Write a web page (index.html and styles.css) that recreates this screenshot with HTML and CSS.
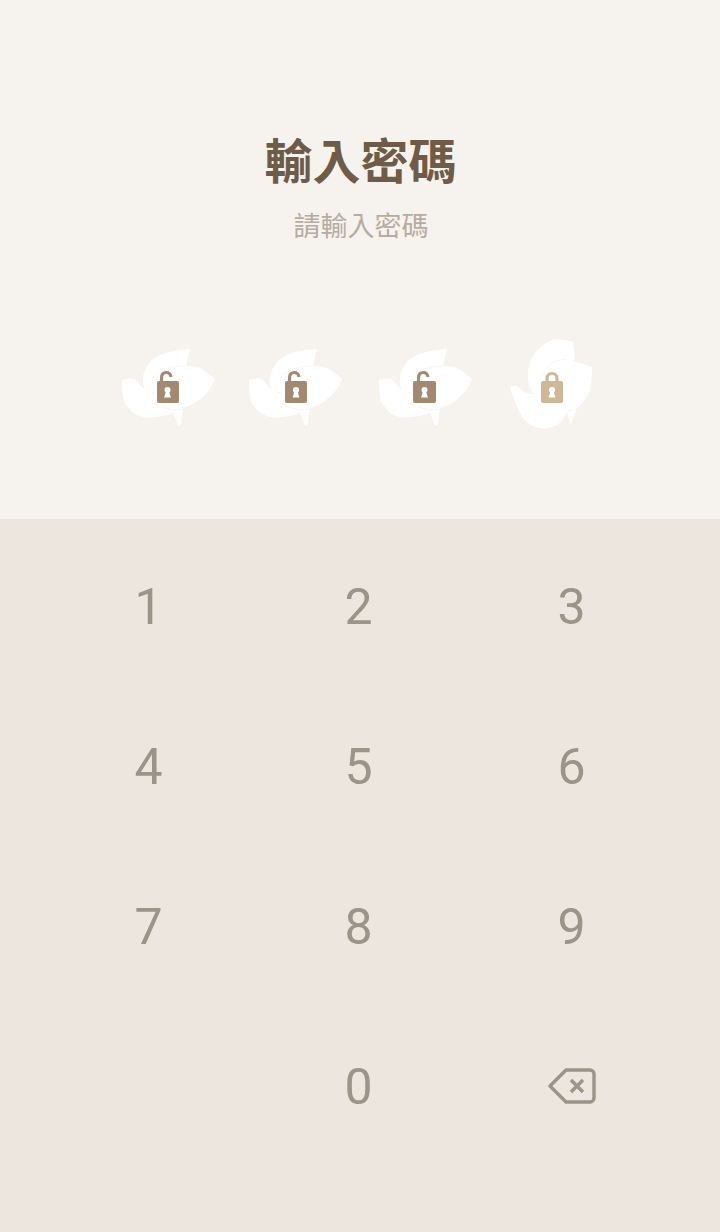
FILE: index.html
```html
<!DOCTYPE html>
<html lang="zh-Hant">
<head>
<meta charset="utf-8">
<title>輸入密碼</title>
<link rel="stylesheet" href="styles.css">
</head>
<body>
<svg class="defs" width="0" height="0" aria-hidden="true">
  <defs>
    <g id="dove">
      <path class="white" d="M2 42C7 41 11 40 14 41C19 44 20 49 26 52L60 70L50 76C40 79 30 80 23 79C15 77 8 72 4 63C2 56 2 49 2 42Z"/>
      <path class="white" d="M70 11C55 12 40 15 32 22C24 30 21 40 24 50L28 56L60 40L66 28Z"/>
      <path class="white" d="M45 30C55 27 70 27 80 30C86 33 90 37 95 41C91 50 85 59 75 65C65 71 55 72 46 70L30 50Z"/>
      <path class="white" d="M53 75L58 87C59 88 60 87 61 86L63 70L50 72Z"/>
      <path class="seam" d="M66 28C55 28 44 30 37 37M40 68C48 72 56 72 63 71"/>
    </g>
    <g id="dove-tall">
      <path class="white" d="M4 49C7 48 10 47 12 49C16 52 20 56 27 56L45 50L71 60L71 70L65 87L61 75C58 80 55 84 51 87C45 90 38 91 33 90C24 88 17 82 13 73C9 65 6 57 4 49Z"/>
      <path class="white" d="M67 4C60 2 52 1 46 2C36 6 28 14 24 24C21 34 21 46 26 55L40 55L60 26L69 21Z"/>
      <path class="white" d="M36 32C42 25 48 21 54 21C65 22 76 25 86 29C86 38 85 46 84 52C81 60 76 66 71 70L40 62Z"/>
      <path class="seam" d="M60 21C46 22 37 30 35 42M62 72C66 73 69 72 71 70"/>
    </g>
    <g id="keyhole">
      <circle cx="0" cy="0" r="3"/>
      <path d="M-1.4 1L-3.4 7.4H3.4L1.4 1Z"/>
    </g>
  </defs>
</svg>
<main class="screen">
  <section class="prompt">
    <h1 class="title">輸入密碼</h1>
    <p class="subtitle">請輸入密碼</p>
    <div class="slots">
      <svg class="slot" viewBox="0 0 100 95"><use href="#dove"/><rect class="lock" x="37" y="43" width="22" height="22" rx="2"/><path class="shackle" d="M41.5 45V40C41.5 36 44 34.5 46.5 34.5C49 34.5 50.5 36.5 51 39"/><use class="hole" href="#keyhole" x="47.5" y="52"/></svg>
      <svg class="slot" viewBox="0 0 100 95"><use href="#dove"/><rect class="lock" x="38" y="43" width="22" height="22" rx="2"/><path class="shackle" d="M42.5 45V40C42.5 36 45 34.5 47.5 34.5C50 34.5 51.5 36.5 52 39"/><use class="hole" href="#keyhole" x="49" y="52"/></svg>
      <svg class="slot" viewBox="0 0 100 95"><use href="#dove"/><rect class="lock" x="36" y="43" width="23" height="22" rx="2"/><path class="shackle" d="M41.5 45V40C41.5 36 44 34.5 46.5 34.5C49 34.5 50.5 36.5 51 39"/><use class="hole" href="#keyhole" x="47.5" y="52"/></svg>
      <svg class="slot" viewBox="0 0 100 95"><use href="#dove-tall"/><rect class="lock lock-on" x="35" y="43" width="22" height="22" rx="2"/><path class="shackle shackle-on" d="M41 45V40.5a5 5 0 0 1 10 0V45"/><use class="hole" href="#keyhole" x="46" y="52"/></svg>
    </div>
  </section>
  <section class="keypad">
    <div class="key">1</div>
    <div class="key">2</div>
    <div class="key">3</div>
    <div class="key">4</div>
    <div class="key">5</div>
    <div class="key">6</div>
    <div class="key">7</div>
    <div class="key">8</div>
    <div class="key">9</div>
    <div class="key"></div>
    <div class="key">0</div>
    <div class="key">
      <svg class="backspace" viewBox="0 0 50 36"><path class="bs-line" d="M18 2H42a4 4 0 0 1 4 4V30a4 4 0 0 1-4 4H18L2 18Z"/><path class="bs-line" d="M23 12L35 24M35 12L23 24"/></svg>
    </div>
  </section>
</main>
</body>
</html>
```
FILE: styles.css
```css
* {
  box-sizing: border-box;
}

html,
body {
  margin: 0;
  padding: 0;
}

body {
  width: 720px;
  height: 1232px;
  overflow: hidden;
  font-family: "Noto Sans CJK TC", "Noto Sans CJK SC", sans-serif;
}

.defs {
  display: block;
  height: 0;
}

.screen {
  display: flex;
  flex-direction: column;
  height: 1232px;
}

.prompt {
  height: 519px;
  padding-top: 123px;
  background: #f6f3ee;
  text-align: center;
}

.title {
  margin: 0;
  padding-left: 1px;
  height: 70px;
  font-size: 48px;
  line-height: 70px;
  font-weight: 700;
  color: #6f5c48;
}

.subtitle {
  margin: 0;
  margin-top: 13px;
  padding-left: 2px;
  height: 38px;
  font-size: 27px;
  line-height: 38px;
  font-weight: 400;
  color: #b5aca2;
}

.slots {
  display: grid;
  grid-template-columns: 127px 130px 129px 100px;
  margin-top: 94px;
  padding-left: 120px;
  height: 95px;
}

.slot {
  display: block;
  width: 100px;
  height: 95px;
}

.white {
  fill: #ffffff;
}

.seam {
  fill: none;
  stroke: #f8f6f2;
  stroke-width: 1;
}

.lock {
  fill: #a28a72;
}

.lock-on {
  fill: #ceb898;
}

.shackle {
  fill: none;
  stroke: #a28a72;
  stroke-width: 3.2;
}

.shackle-on {
  stroke: #ceb898;
}

.hole {
  fill: #ffffff;
}

.keypad {
  flex: 1;
  display: grid;
  grid-template-columns: 211px 209px 217px;
  grid-auto-rows: 160px;
  align-content: start;
  padding: 8px 0 0 43px;
  background: #ede6df;
}

.key {
  display: flex;
  align-items: center;
  justify-content: center;
  font-family: Roboto, sans-serif;
  font-size: 50px;
  line-height: 1;
  color: #9c9488;
}

.backspace {
  display: block;
  width: 50px;
  height: 36px;
  margin-left: 2px;
  margin-bottom: 2px;
}

.bs-line {
  fill: none;
  stroke: #9c9488;
  stroke-width: 3.4;
  stroke-linejoin: round;
}
```
